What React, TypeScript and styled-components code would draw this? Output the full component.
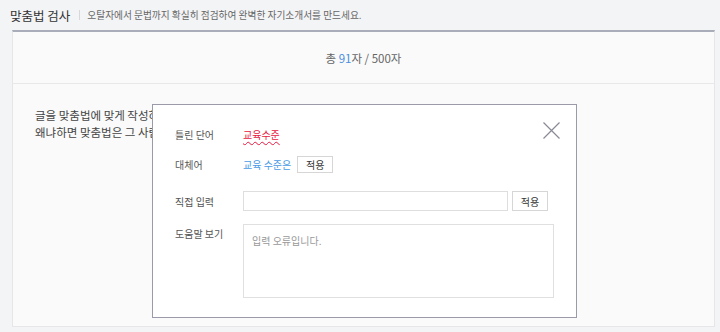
import React from "react";
import styled, { createGlobalStyle } from "styled-components";

const GlobalStyle = createGlobalStyle`
  html, body {
    margin: 0;
    padding: 0;
    background: #f3f4f6;
    font-family: "Noto Sans CJK KR", "Noto Sans", sans-serif;
  }
`;

const TopBar = styled.div`
  height: 30px;
  display: flex;
  align-items: center;
  padding-left: 10px;
`;
const Title = styled.h1`
  margin: 0;
  font-size: 12.5px;
  font-weight: 400;
  color: #333;
`;
const Divider = styled.span`
  width: 1px;
  height: 10px;
  background: #d8d8d8;
  margin: 0 7px 0 9px;
`;
const Subtitle = styled.span`
  font-size: 9.7px;
  color: #666;
`;

const Panel = styled.section`
  position: relative;
  margin-left: 12px;
  width: 701px;
  height: 294px;
  background: #fafafa;
  border-top: 2px solid #a9acb9;
  border-left: 1px solid #e6e6e8;
  border-right: 1px solid #e6e6e8;
  border-bottom: 1px solid #e6e6e8;
`;
const Counter = styled.div`
  height: 51px;
  display: flex;
  align-items: center;
  justify-content: center;
  border-bottom: 1px solid #e8e8ea;
  font-size: 11.5px;
  color: #666;
`;
const Num = styled.span`
  color: #4a8fe0;
`;
const Body = styled.div`
  padding: 23px 22px 0;
  font-size: 11.5px;
  line-height: 17px;
  color: #444;
`;
const Line = styled.p`
  margin: 0;
  white-space: nowrap;
`;

const Modal = styled.div`
  position: absolute;
  left: 139px;
  top: 72px;
  width: 425px;
  height: 214px;
  box-sizing: border-box;
  background: #fff;
  border: 1px solid #9a9aa8;
  padding: 20px 0 0 22px;
`;
const Close = styled.button`
  position: absolute;
  right: 15px;
  top: 16px;
  width: 19px;
  height: 19px;
  padding: 0;
  border: none;
  background: none;
  display: flex;
`;
const Row = styled.div<{ $gap: number; $h: number; $top?: boolean }>`
  display: flex;
  align-items: ${(p) => (p.$top ? "flex-start" : "center")};
  margin-top: ${(p) => p.$gap}px;
  min-height: ${(p) => p.$h}px;
  font-size: 10px;
`;
const Label = styled.div<{ $pad?: number }>`
  width: 68px;
  flex: none;
  color: #555;
  padding-top: ${(p) => p.$pad ?? 0}px;
`;
const Wrong = styled.span`
  color: #e8173f;
  text-decoration: underline wavy #e8173f;
  text-decoration-thickness: 1px;
  text-underline-offset: 2px;
`;
const Suggest = styled.span`
  color: #4a9be6;
  margin-right: 6px;
`;
const SmallButton = styled.button<{ $h: number }>`
  width: 36px;
  height: ${(p) => p.$h}px;
  padding: 0;
  border: 1px solid #d6d6d6;
  background: #fff;
  font-family: inherit;
  font-size: 10px;
  color: #333;
`;
const Input = styled.input`
  width: 265px;
  height: 20px;
  box-sizing: border-box;
  border: 1px solid #dedede;
  margin-right: 4px;
  outline: none;
`;
const Help = styled.div`
  width: 311px;
  height: 74px;
  box-sizing: border-box;
  border: 1px solid #e0e0e0;
  padding: 8px 8px;
  color: #999;
  font-size: 10px;
`;

const CloseIcon = () => (
  <svg width="19" height="19" viewBox="0 0 19 19">
    <path d="M1.5 1.5 L17.5 17.5 M17.5 1.5 L1.5 17.5" stroke="#8a8a96" strokeWidth="1.2" fill="none" />
  </svg>
);

export default function App() {
  return (
    <>
      <GlobalStyle />
      <TopBar>
        <Title>맞춤법 검사</Title>
        <Divider />
        <Subtitle>오탈자에서 문법까지 확실히 점검하여 완벽한 자기소개서를 만드세요.</Subtitle>
      </TopBar>
      <Panel>
        <Counter>
          <span>
            총 <Num>91</Num>자 / 500자
          </span>
        </Counter>
        <Body>
          <Line>글을 맞춤법에 맞게 작성하는 것은 자기소개서에서 매우 중요합니다.</Line>
          <Line>왜냐하면 맞춤법은 그 사람의 교육수준을 보여주는 지표이기 때문입니다.</Line>
        </Body>
        <Modal>
          <Close aria-label="닫기">
            <CloseIcon />
          </Close>
          <Row $gap={0} $h={18}>
            <Label>틀린 단어</Label>
            <Wrong>교육수준</Wrong>
          </Row>
          <Row $gap={12} $h={18}>
            <Label>대체어</Label>
            <Suggest>교육 수준은</Suggest>
            <SmallButton $h={17}>적용</SmallButton>
          </Row>
          <Row $gap={18} $h={20}>
            <Label>직접 입력</Label>
            <Input />
            <SmallButton $h={20}>적용</SmallButton>
          </Row>
          <Row $gap={13} $h={74} $top>
            <Label $pad={2}>도움말 보기</Label>
            <Help>입력 오류입니다.</Help>
          </Row>
        </Modal>
      </Panel>
    </>
  );
}
